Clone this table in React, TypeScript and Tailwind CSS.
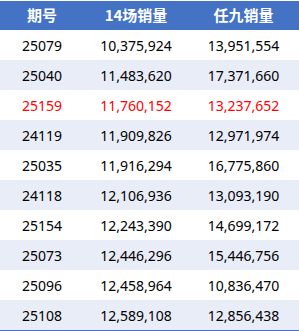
import React from "react";

const rows: [string, string, string][] = [
  ["25079", "10,375,924", "13,951,554"],
  ["25040", "11,483,620", "17,371,660"],
  ["25159", "11,760,152", "13,237,652"],
  ["24119", "11,909,826", "12,971,974"],
  ["25035", "11,916,294", "16,775,860"],
  ["24118", "12,106,936", "13,093,190"],
  ["25154", "12,243,390", "14,699,172"],
  ["25073", "12,446,296", "15,446,756"],
  ["25096", "12,458,964", "10,836,470"],
  ["25108", "12,589,108", "12,856,438"],
];

export default function App() {
  return (
    <div
      className="w-[299px] h-[331px] bg-white flex flex-col"
      style={{ fontFamily: '"Noto Sans", "Noto Sans CJK SC", sans-serif' }}
    >
      <div className="h-px bg-white" />
      <div className="h-[29px] bg-[#4472c4] grid grid-cols-[84px_104px_111px] items-center text-white font-bold text-[15px]">
        <div className="text-center" style={{ fontFamily: '"Noto Sans CJK SC", sans-serif' }}>期号</div>
        <div className="text-center" style={{ fontFamily: '"Noto Sans CJK SC", sans-serif' }}>14场销量</div>
        <div className="text-center" style={{ fontFamily: '"Noto Sans CJK SC", sans-serif' }}>任九销量</div>
      </div>
      {rows.map((r, i) => (
        <div
          key={r[0]}
          className={`h-[30px] grid grid-cols-[84px_104px_111px] items-center text-[14px] ${
            i % 2 === 1 ? "bg-[#e9edf7]" : "bg-white"
          } ${r[0] === "25159" ? "text-[#ff0000]" : "text-black"}`}
        >
          <div className="text-center">{r[0]}</div>
          <div className="text-center">{r[1]}</div>
          <div className="text-center">{r[2]}</div>
        </div>
      ))}
      <div className="h-px bg-[#4472c4]" />
    </div>
  );
}
